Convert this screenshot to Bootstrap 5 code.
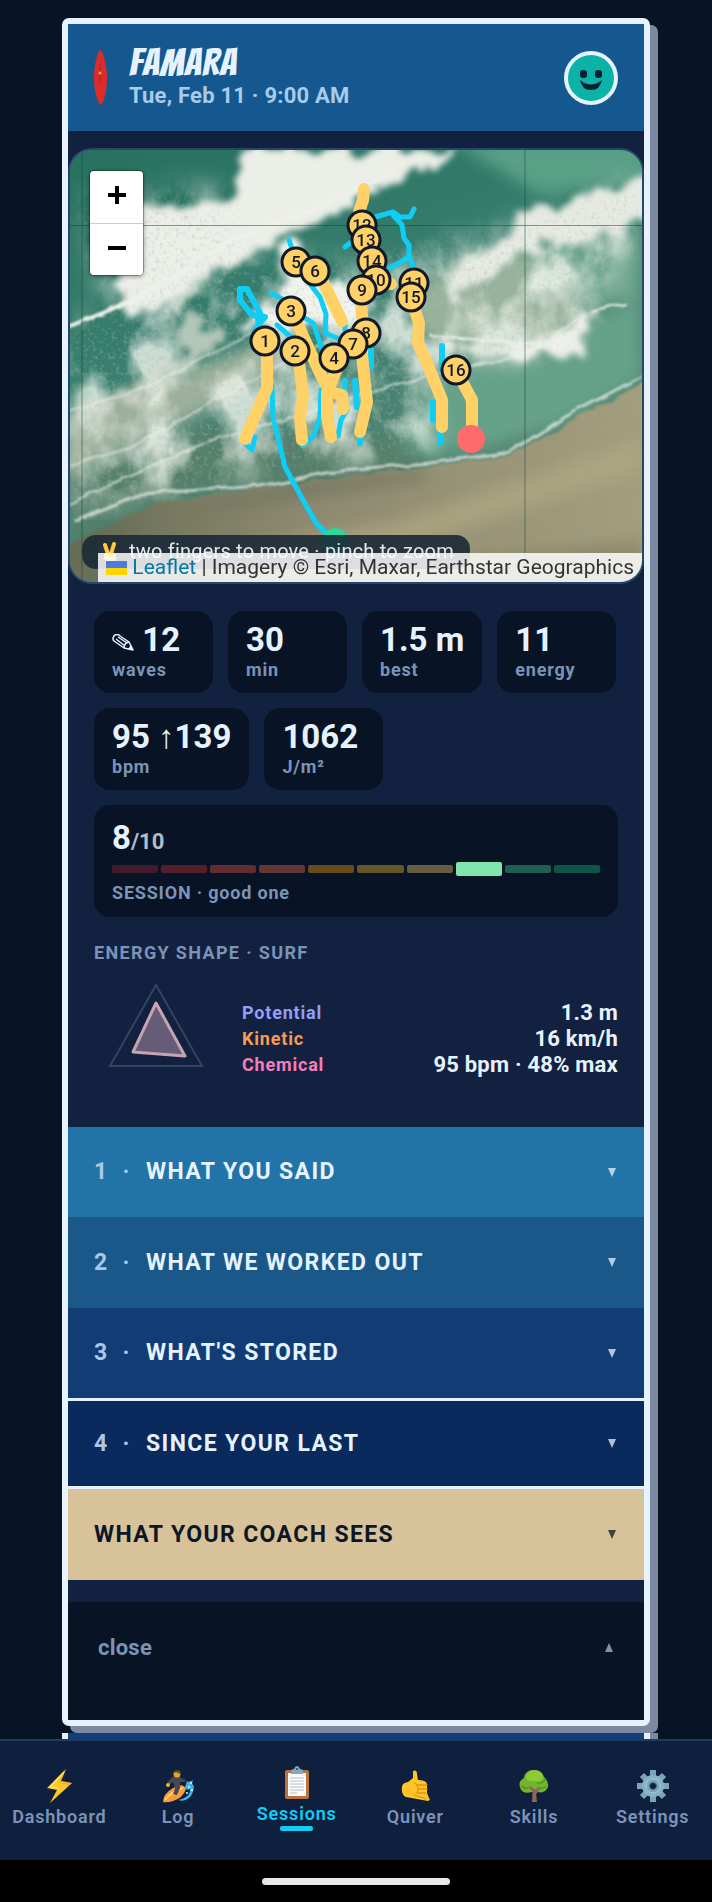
<!DOCTYPE html>
<html lang="en">
<head>
<meta charset="utf-8">
<meta name="viewport" content="width=device-width, initial-scale=1">
<title>Sessions</title>
<link href="https://cdn.jsdelivr.net/npm/bootstrap@5.3.0/dist/css/bootstrap.min.css" rel="stylesheet">
<style>
  :root { --ink:#081425; --panel:#132140; --ice:#e6f3ff; --muted:#7c93b8; --cyan:#10cdf5; --shade:#7b8aa2; }
  body { background:var(--ink); color:var(--ice); font-family:Roboto,"Liberation Sans",sans-serif; line-height:1.2; }
  button { font-family:inherit; }
  .feed { padding:18px 62px 0; min-height:0; }
  .session { background:var(--panel); border:6px solid var(--ice); border-radius:7px; box-shadow:8px 7px 0 var(--shade); }
  .session-next { background:#123f76; border:solid var(--ice); border-width:0 6px; box-shadow:8px 0 0 var(--shade); margin-top:7px; height:120px; position:relative; }
  .session-head { background:#15588f; padding:0 26px; height:107px; gap:22px; }
  .spot { font:400 38px/36px Bangers,"Roboto Condensed",Roboto,sans-serif; letter-spacing:1px; margin:0; }
  .when { font-size:22px; font-weight:700; line-height:30px; letter-spacing:.01em; color:#a9cbea; }
  .map-box { margin-top:17px; height:436px; border:2px solid #24476a; border-radius:24px; overflow:hidden; position:relative; background:#4b8a77; }
  .map-art { width:100%; height:100%; display:block; }
  .pin circle { fill:#ffd166; stroke:#111827; stroke-width:3; }
  .pin text { font:500 17px Roboto,sans-serif; fill:#111827; text-anchor:middle; }
  .zoom-box { position:absolute; left:20px; top:21px; width:53px; border-radius:4px; overflow:hidden; box-shadow:0 0 0 1px #0004,0 1px 5px #0007; }
  .zoom-box button { background:#fff; border:0; height:52px; width:100%; padding:0 0 4px; display:flex; align-items:center; justify-content:center; }
  .zoom-box button + button { border-top:1px solid #ccc; }
  .map-hint { position:absolute; left:12px; bottom:13px; height:34px; border-radius:14px; background:#1b2937e6; color:#dfe9ef; font-size:20px; line-height:32px; padding:0 16px 0 20px; letter-spacing:.01em; white-space:nowrap; }
  .map-credit { position:absolute; right:0; bottom:0; background:#ffffffd6; color:#333; font-size:21px; line-height:28px; height:29px; padding:0 8px; white-space:nowrap; }
  .map-credit a { color:#0078a8; text-decoration:none; }
  .stats { padding:27px 26px 0; gap:15px; }
  .stat { background:var(--ink); border-radius:16px; min-width:119px; height:82px; padding:10px 18px 0 18px; }
  .stat-num { font-size:33px; font-weight:700; line-height:38px; }
  .stat-name { font-size:18px; font-weight:700; line-height:22px; letter-spacing:.045em; color:var(--muted); }
  .score { height:112px; padding-top:14px; }
  .score-of { font-size:22px; font-weight:700; color:#b2bdca; }
  .meter { gap:3px; height:14px; margin:1px 0 6px; }
  .meter span { flex:1; height:8px; border-radius:2px; }
  .meter .now { height:14px; background:#7fe5ae; }
  .energy { padding:26px 26px 0; height:210px; }
  .energy-title { font-size:18px; font-weight:700; letter-spacing:.075em; line-height:20px; color:var(--muted); margin:0 0 2px; }
  .energy-chart { gap:24px; }
  .energy-rows { padding-top:35px; }
  .energy-rows div { height:26px; }
  .energy-rows dt { font-size:18px; font-weight:700; letter-spacing:.045em; }
  .energy-rows dd { font-size:22px; font-weight:700; letter-spacing:.01em; margin:0; }
  .fold { border:0; width:100%; padding:0 26px; height:91px; color:var(--ice); font-size:23px; font-weight:700; letter-spacing:.06em; text-align:left; }
  .fold-no { width:52px; color:#a9c8e8; gap:14px; }
  .fold .tri { opacity:.75; }
  .fold-said { background:#2273a7; height:90px; } .fold-worked { background:#195889; } .fold-stored { background:#113d74; height:90px; }
  .fold-last { background:#0a295d; border:solid var(--ice); border-width:3px 0; }
  .fold-coach { background:#d7c299; color:#0b1726; }
  .close-btn { border:0; width:100%; margin-top:22px; height:118px; background:var(--ink); color:var(--muted); font-size:22px; font-weight:700; letter-spacing:.01em; padding:33px 31px 0 30px; }
  .tabs { background:#0f1f3e; border-top:2px solid #213a5d; height:121px; padding-top:28px; position:relative; }
  .tabs a { flex:1 1 0; color:var(--muted); font-size:18px; font-weight:600; letter-spacing:.045em; line-height:22px; text-decoration:none; }
  .tabs svg { width:34px; height:34px; display:block; margin-bottom:3px; }
  .tabs a.active { color:var(--cyan); margin-top:-3px; }
  .tabs a.active::after { content:""; width:33px; height:5px; border-radius:2px; background:var(--cyan); margin-top:1px; }
  .home-strip { height:42px; background:#000; }
  .home-strip span { width:188px; height:7px; border-radius:4px; background:#e8e8e8; }
</style>
</head>
<body class="vh-100 d-flex flex-column overflow-hidden">
<main class="feed flex-grow-1 overflow-hidden">
  <article class="session">
    <header class="session-head d-flex align-items-center">
      <svg width="13" height="55" viewBox="0 0 13 55" aria-hidden="true"><path d="M6 0C9 1 13 14 13 28S9 54 7 55C4 54 0 42 0 28S4 1 6 0Z" fill="#dc2b2b"/><path d="M6 14v20" stroke="#a8261f"/><circle cx="6" cy="23" r="1.500" fill="#e9b13a"/></svg>
      <div class="flex-grow-1">
        <h1 class="spot">FAMARA</h1>
        <div class="when">Tue, Feb 11 · 9:00 AM</div>
      </div>
      <svg width="54" height="54" viewBox="0 0 54 54" role="img" aria-label="Happy"><circle cx="27" cy="27" r="25" fill="#0ab3a5" stroke="#e6f3ff" stroke-width="4"/><rect x="16" y="19" width="7" height="8" rx="3" fill="#0b1f33"/><rect x="31" y="19" width="7" height="8" rx="3" fill="#0b1f33"/><path d="M16 29Q27 38 38 29Q36 39 27 39Q18 39 16 29Z" fill="#0b1f33"/></svg>
    </header>

    <section class="map-box" aria-label="Session map">
      <svg class="map-art" viewBox="70 150 572 432" preserveAspectRatio="xMidYMid slice">
        <defs>
          <filter id="foam" x="-10%" y="-10%" width="120%" height="120%">
            <feTurbulence type="fractalNoise" baseFrequency=".04" numOctaves="5" seed="4" result="n"/>
            <feDisplacementMap in="SourceGraphic" in2="n" scale="40" xChannelSelector="R" yChannelSelector="G" result="d"/>
            <feGaussianBlur in="d" stdDeviation="3"/>
          </filter>
          <filter id="soft" x="-20%" y="-20%" width="140%" height="140%"><feGaussianBlur stdDeviation="8"/></filter>
          <filter id="feather" x="-20%" y="-20%" width="140%" height="140%"><feGaussianBlur stdDeviation="14"/></filter>
          <filter id="edge"><feTurbulence type="fractalNoise" baseFrequency=".04" numOctaves="3" seed="9" result="n"/><feDisplacementMap in="SourceGraphic" in2="n" scale="6"/><feGaussianBlur stdDeviation=".9"/></filter>
          <filter id="grain" x="0" y="0" width="100%" height="100%"><feTurbulence type="fractalNoise" baseFrequency=".022 .016" numOctaves="6" seed="12"/><feColorMatrix values="0 0 0 0 .88  0 0 0 0 .91  0 0 0 0 .85  2.600 1.600 0 0 -1.750"/></filter>
          <filter id="fleck" x="0" y="0" width="100%" height="100%"><feTurbulence type="fractalNoise" baseFrequency=".25" numOctaves="3" seed="5"/><feColorMatrix values="0 0 0 0 .42  0 0 0 0 .52  0 0 0 0 .46  0 3 0 0 -1.550"/></filter>
          <mask id="wash"><path filter="url(#feather)" fill="#fff" d="M85 200L215 190L240 260L350 265L500 235L640 180L640 225L590 310L560 345L440 375L430 450L250 475L70 510V330L240 260L110 300Z"/></mask>
          <linearGradient id="sea" x1="0" y1="0" x2=".35" y2="1"><stop offset="0" stop-color="#26705f"/><stop offset=".5" stop-color="#3b8070"/><stop offset="1" stop-color="#5f8673"/></linearGradient>
          <linearGradient id="sand" x1="0" y1="0" x2="1" y2="0"><stop offset="0" stop-color="#666c54"/><stop offset=".4" stop-color="#8d8970"/><stop offset="1" stop-color="#a49f7e"/></linearGradient>
        </defs>
        <rect x="60" y="140" width="600" height="460" fill="url(#sea)"/>
        <g filter="url(#soft)">
          <path d="M420 380L642 300V380L560 425L480 450L400 455Z" fill="#66a18a"/>
          <path d="M70 480L200 430L400 440L430 470L200 490L70 530Z" fill="#56806c"/>
          <path d="M450 140H660V180L540 195Z" fill="#5aa087"/>
          <path d="M60 415L270 340L300 360L150 440L60 480Z" fill="#9db09c"/>
          <path d="M450 262L545 245L590 320L535 355L430 345L400 300Z" fill="#97b29c"/>
          <path d="M520 255L642 225V300L600 305Z" fill="#6ea58e"/>
        </g>
        <g mask="url(#wash)"><rect x="70" y="150" width="572" height="370" filter="url(#grain)" opacity=".8"/></g>
        <g filter="url(#foam)">
          <path d="M245 150H465L420 172L360 198L295 232L240 258L180 292L130 322L122 300L115 215L160 205L225 210Z" fill="#eceee8"/>
          <path d="M280 245L300 240L320 285L375 302L355 320L275 335L235 330L282 300Z" fill="#f2f3ef"/>
          <path d="M515 222L570 198L660 172V222L555 245L515 255L480 280L450 300L440 290Z" fill="#e6eae2"/>
          <path d="M545 335L600 312L580 350L530 358L450 350L440 342L520 345Z" fill="#eef0ea"/>
          <path d="M180 310L225 335L200 365L150 395L80 422L85 408L140 385L180 355Z" fill="#d3dacd" opacity=".8"/>
        </g>
        <g mask="url(#wash)"><rect x="70" y="150" width="572" height="370" filter="url(#fleck)" opacity=".4"/></g>
        <path d="M60 550L150 505L260 488L350 476L430 466L510 455L563 425L660 374V600H60Z" fill="url(#sand)" filter="url(#edge)"/>
        <g filter="url(#soft)" opacity=".6"><path d="M60 560L160 515L420 480L430 470L300 485L100 530Z" fill="#5b6450"/><path d="M470 560L642 540V600H440Z" fill="#7f7c64"/><path d="M180 560L400 520L642 440L642 470L400 550Z" fill="#b5ac86"/></g>
        <g filter="url(#edge)" fill="none" stroke="#eef1ea" stroke-linecap="round" stroke-linejoin="round">
          <path d="M70 326L110 310L170 280L205 255L255 230L300 214L345 195L395 172" stroke-width="4"/>
          <path d="M70 410L130 393L180 370L250 335L340 302L400 285" stroke-width="2" opacity=".6"/>
          <path d="M70 465L130 448L190 415L260 375L330 340" stroke-width="2" opacity=".6"/>
          <path d="M70 505L130 475L200 445L300 415L400 382L500 360L545 345L578 318" stroke-width="2" opacity=".7"/>
          <path d="M75 520L140 494L260 486L340 470L430 463L510 452L565 417L642 376" stroke-width="3" opacity=".7"/>
          <path d="M430 335L480 340L540 345M592 312L625 304" stroke-width="2"/>
        </g>
        <path d="M70 225.500H642M525 150V582M82 150V582" stroke="#1b3d3a" stroke-opacity=".5" stroke-width="1" fill="none"/>
        <g fill="none" stroke="#10cdf5" stroke-width="5" stroke-linecap="round" stroke-linejoin="round">
          <path d="M272 386L273 417L285 467L303 500L316 523L327 534"/>
          <path d="M255 332L262 317L247 289L240 289L240 300L252 315L265 317L258 325M258 318L260 333" stroke-width="6"/>
          <path d="M271 293L282 299M277 325L292 338"/>
          <path d="M305 318L313 323L320 343L324 357M310 284L320 297L326 314L325 333L337 338M345 324V330"/>
          <path d="M289 240L293 252M345 247L350 243"/>
          <path d="M375 217L393 212L400 217L410 217L414 209M393 215L402 225L404 238L409 245L409 257L390 268M409 255L414 270"/>
          <path d="M243 442L252 450L255 437M303 446L314 435L320 417L321 390M338 436L341 420L347 410M345 380V392"/>
          <path d="M371 350V367M355 381L357 407M360 435V443M442 346V370M433 402V420M440 433V443" stroke-width="6"/>
        </g>
        <g fill="none" stroke="#ffd166" stroke-width="12" stroke-linecap="round" stroke-linejoin="round">
          <path d="M267 350V388L245 439"/><path d="M299 362L303 395L300 418L302 440"/>
          <path d="M297 323L320 373L330 392L342 395L343 409"/><path d="M337 368L327 393V417L331 437"/>
          <path d="M323 282L342 321"/><path d="M361 300L363 330L362 355L367 402L360 432"/>
          <path d="M364 189L363 200L359 212"/><path d="M385 280L391 284"/>
          <path d="M415 310L419 323L418 343L427 363L442 400V427"/><path d="M463 383L472 400V425"/>
        </g>
        <circle cx="471" cy="439" r="14" fill="#ff6b6b"/>
        <circle cx="335" cy="541" r="13" fill="#2fd69a"/>
        <g class="pin">
          <circle cx="362" cy="225" r="14"/><text x="362" y="231">12</text>
          <circle cx="366" cy="240" r="14"/><text x="366" y="246">13</text>
          <circle cx="372" cy="261" r="14"/><text x="372" y="267">14</text>
          <circle cx="296" cy="262" r="14"/><text x="296" y="268">5</text>
          <circle cx="315" cy="271" r="14"/><text x="315" y="277">6</text>
          <circle cx="376" cy="280" r="14"/><text x="376" y="286">10</text>
          <circle cx="414" cy="283" r="14"/><text x="414" y="289">11</text>
          <circle cx="362" cy="290" r="14"/><text x="362" y="296">9</text>
          <circle cx="411" cy="297" r="14"/><text x="411" y="303">15</text>
          <circle cx="291" cy="311" r="14"/><text x="291" y="317">3</text>
          <circle cx="366" cy="333" r="14"/><text x="366" y="339">8</text>
          <circle cx="265" cy="341" r="14"/><text x="265" y="347">1</text>
          <circle cx="353" cy="344" r="14"/><text x="353" y="350">7</text>
          <circle cx="295" cy="351" r="14"/><text x="295" y="357">2</text>
          <circle cx="334" cy="358" r="14"/><text x="334" y="364">4</text>
          <circle cx="456" cy="370" r="14"/><text x="456" y="376">16</text>
        </g>
      </svg>
      <div class="zoom-box">
        <button type="button" aria-label="Zoom in"><svg width="20" height="20" viewBox="0 0 20 20"><path d="M10 1v18M1 10h18" stroke="#000" stroke-width="4"/></svg></button>
        <button type="button" aria-label="Zoom out"><svg width="20" height="20" viewBox="0 0 20 20"><path d="M1 10h18" stroke="#000" stroke-width="4"/></svg></button>
      </div>
      <div class="map-hint"><svg width="17" height="22" viewBox="0 0 17 22" aria-hidden="true" style="margin-right:10px"><path d="M6 12L3 3M9 12L12 2" stroke="#ffc83d" stroke-width="4" stroke-linecap="round"/><path d="M2 12Q8 8 14 12V17Q12 22 8 22Q3 21 2 16Z" fill="#ffc83d"/><path d="M4 15Q7 12 11 14" stroke="#d98e1f" fill="none"/></svg>two fingers to move · pinch to zoom</div>
      <div class="map-credit"><svg width="21" height="14" viewBox="0 0 21 14" aria-hidden="true"><path fill="#4c7be1" d="M0 0h21v7H0z"/><path fill="#ffd500" d="M0 7h21v7H0z"/></svg> <a href="#leaflet">Leaflet</a> | Imagery © Esri, Maxar, Earthstar Geographics</div>
    </section>

    <section class="stats d-flex flex-wrap">
      <div class="stat"><div class="stat-num"><svg width="22" height="17" viewBox="0 0 22 17" role="img" aria-label="Edited"><g fill="none" stroke="#e6f3ff" stroke-width="1.500" stroke-linejoin="round"><path d="M2 2Q5-1 8 2L17 8L21 16L12 14L2 7Q0 5 2 2Z"/><path d="M4 5L13 12M6 3L15 9M12 14Q12 9 17 8"/></g><path d="M21 16L16 15L19 11Z" fill="#e6f3ff"/></svg> 12</div><div class="stat-name">waves</div></div>
      <div class="stat"><div class="stat-num">30</div><div class="stat-name">min</div></div>
      <div class="stat"><div class="stat-num">1.5 m</div><div class="stat-name">best</div></div>
      <div class="stat"><div class="stat-num">11</div><div class="stat-name">energy</div></div>
      <div class="stat"><div class="stat-num">95 ↑139</div><div class="stat-name">bpm</div></div>
      <div class="stat"><div class="stat-num">1062</div><div class="stat-name">J/m²</div></div>
      <div class="stat score w-100">
        <div class="stat-num">8<span class="score-of">/10</span></div>
        <div class="meter d-flex align-items-center">
          <span style="background:#421c2a"></span><span style="background:#541f2a"></span><span style="background:#622c33"></span><span style="background:#623735"></span><span style="background:#664b1d"></span><span style="background:#665527"></span><span style="background:#665c43"></span><span class="now"></span><span style="background:#1e5e50"></span><span style="background:#0b5649"></span>
        </div>
        <div class="stat-name">SESSION · good one</div>
      </div>
    </section>

    <section class="energy">
      <h2 class="energy-title">ENERGY SHAPE · SURF</h2>
      <div class="energy-chart d-flex">
        <svg width="124" height="124" viewBox="0 0 124 124" class="flex-shrink-0" aria-hidden="true"><path d="M62 20L108 101H16Z" fill="none" stroke="#34435f" stroke-width="2"/><path d="M62 38L91 91L39 87Z" fill="#655d78" stroke="#c8a3b2" stroke-width="3" stroke-linejoin="round"/></svg>
        <dl class="energy-rows flex-grow-1 mb-0">
          <div class="d-flex justify-content-between align-items-center"><dt style="color:#919ff5">Potential</dt><dd>1.3 m</dd></div>
          <div class="d-flex justify-content-between align-items-center"><dt style="color:#f79b55">Kinetic</dt><dd>16 km/h</dd></div>
          <div class="d-flex justify-content-between align-items-center"><dt style="color:#f47fb8">Chemical</dt><dd>95 bpm · 48% max</dd></div>
        </dl>
      </div>
    </section>

    <button type="button" class="fold fold-said d-flex align-items-center"><span class="fold-no d-flex"><span>1</span><span>·</span></span><span class="flex-grow-1">WHAT YOU SAID</span><svg class="tri" width="12" height="9" viewBox="0 0 12 9"><path d="M2 0h8L6 9z" fill="currentColor"/></svg></button>
    <button type="button" class="fold fold-worked d-flex align-items-center"><span class="fold-no d-flex"><span>2</span><span>·</span></span><span class="flex-grow-1">WHAT WE WORKED OUT</span><svg class="tri" width="12" height="9" viewBox="0 0 12 9"><path d="M2 0h8L6 9z" fill="currentColor"/></svg></button>
    <button type="button" class="fold fold-stored d-flex align-items-center"><span class="fold-no d-flex"><span>3</span><span>·</span></span><span class="flex-grow-1">WHAT'S STORED</span><svg class="tri" width="12" height="9" viewBox="0 0 12 9"><path d="M2 0h8L6 9z" fill="currentColor"/></svg></button>
    <button type="button" class="fold fold-last d-flex align-items-center"><span class="fold-no d-flex"><span>4</span><span>·</span></span><span class="flex-grow-1">SINCE YOUR LAST</span><svg class="tri" width="12" height="9" viewBox="0 0 12 9"><path d="M2 0h8L6 9z" fill="currentColor"/></svg></button>
    <button type="button" class="fold fold-coach d-flex align-items-center"><span class="flex-grow-1">WHAT YOUR COACH SEES</span><svg class="tri" width="12" height="9" viewBox="0 0 12 9"><path d="M2 0h8L6 9z" fill="currentColor"/></svg></button>
    <button type="button" class="close-btn d-flex justify-content-between align-items-start"><span>close</span><svg class="mt-2" width="8" height="9" viewBox="0 0 8 9"><path d="M0 9h8L4 0z" fill="currentColor"/></svg></button>
  </article>
  <article class="session-next"></article>
</main>

<nav class="tabs d-flex flex-shrink-0" aria-label="Main">
  <a href="#dashboard" class="d-flex flex-column align-items-center"><svg viewBox="0 0 34 34"><path d="M24 0L5 19L15 21L8 34L30 14L19 12Z" fill="#ffc927"/><path d="M24 0L19 12L30 14L22 21L25 16L15 14Z" fill="#f5a623" opacity=".5"/><path d="M22 3L8 18L17 19" fill="none" stroke="#ffe36b" stroke-width="1.500"/></svg>Dashboard</a>
  <a href="#log" class="d-flex flex-column align-items-center"><svg viewBox="0 0 34 34"><path d="M17 31Q30 28 29 20Q25 22 24 18L26 12Q28 14 32 11Q30 15 33 17Q32 26 28 29Q23 33 17 31Z" fill="#3cb4ee"/><g fill="#e6f6ff"><circle cx="28" cy="18" r="1"/><circle cx="30" cy="14" r="1"/><circle cx="26" cy="24" r="1"/><circle cx="31" cy="21" r="1"/></g><path d="M2 33Q2 25 12 19Q22 13 25 20Q22 29 12 32Q6 34 2 33Z" fill="#f79c36"/><path d="M4 31Q10 23 22 19" stroke="#ffd08a" stroke-width="2" fill="none"/><path d="M11 8Q18 5 20 9L25 11L24 13L19 13V19L16 26L12 25L14 20L12 13L8 16L6 14Z" fill="#45494f"/><circle cx="16" cy="5" r="3.500" fill="#e5a52d"/><path d="M12 4Q15-1 20 4L19 5Q16 2 12 4Z" fill="#573b28"/><circle cx="7" cy="16" r="2" fill="#f0b52d"/></svg>Log</a>
  <a href="#sessions" class="active d-flex flex-column align-items-center" aria-current="page"><svg viewBox="0 0 34 34"><rect x="5" y="4" width="24" height="29" rx="2" fill="#bd7143"/><rect x="8" y="7" width="18" height="23" fill="#fbfbfb"/><path d="M10 12h14M10 15h14M10 18h14M10 21h14M10 24h14M10 27h7" stroke="#b8c0cb"/><path d="M11 8V5Q11 3 14 3Q15 0 17 0T20 3Q23 3 23 5V8Z" fill="#84a9bd"/><circle cx="17" cy="3" r="1" fill="#29415c"/></svg>Sessions</a>
  <a href="#quiver" class="d-flex flex-column align-items-center"><svg viewBox="0 0 34 34"><path d="M15 2Q19 0 19 5L20 11Q28 11 29 15V24L31 29Q33 31 30 32L8 28Q3 26 4 18Q4 14 10 13L15 9Z" fill="#ffc526"/><path d="M20 16H29M20 20H29M20 24H28M17 14Q22 18 19 24M16 26L28 30" stroke="#df941c" stroke-width="1.300" fill="none" stroke-linecap="round"/></svg>Quiver</a>
  <a href="#skills" class="d-flex flex-column align-items-center"><svg viewBox="0 0 34 34"><path d="M15 33L16 23L11 18L13 17L17 21L22 17L23 18L19 24L20 33Z" fill="#91665a"/><path d="M17 1Q25 1 27 8Q32 12 31 18Q28 25 21 23L18 20L15 23Q5 26 3 18Q1 12 7 9Q8 1 17 1Z" fill="#70b52c"/><path d="M17 1Q25 1 26 8Q24 14 17 12Q10 13 9 8Q10 1 17 1Z" fill="#8ccb36"/><path d="M20 14Q26 15 28 10M5 17Q8 21 13 18M22 19Q27 20 29 17" stroke="#4c9425" stroke-width="1.300" fill="none"/><path d="M17 33V22L13 18M18 24L22 19" stroke="#91665a" stroke-width="3" fill="none"/></svg>Skills</a>
  <a href="#settings" class="d-flex flex-column align-items-center"><svg viewBox="0 0 34 34"><g stroke="#78a6b8" stroke-width="6"><path d="M17 1V33M1 17H33M6 6L28 28M28 6L6 28"/></g><circle cx="17" cy="17" r="11" fill="#86b2c3"/><circle cx="17" cy="17" r="7" fill="#79a5b6" stroke="#a3cbd8"/><circle cx="17" cy="17" r="3.500" fill="#0f1f3e" stroke="#4f7485"/></svg>Settings</a>
</nav>
<div class="home-strip flex-shrink-0 d-flex align-items-center justify-content-center"><span></span></div>
<script src="https://cdn.jsdelivr.net/npm/bootstrap@5.3.0/dist/js/bootstrap.bundle.min.js"></script>
</body>
</html>
